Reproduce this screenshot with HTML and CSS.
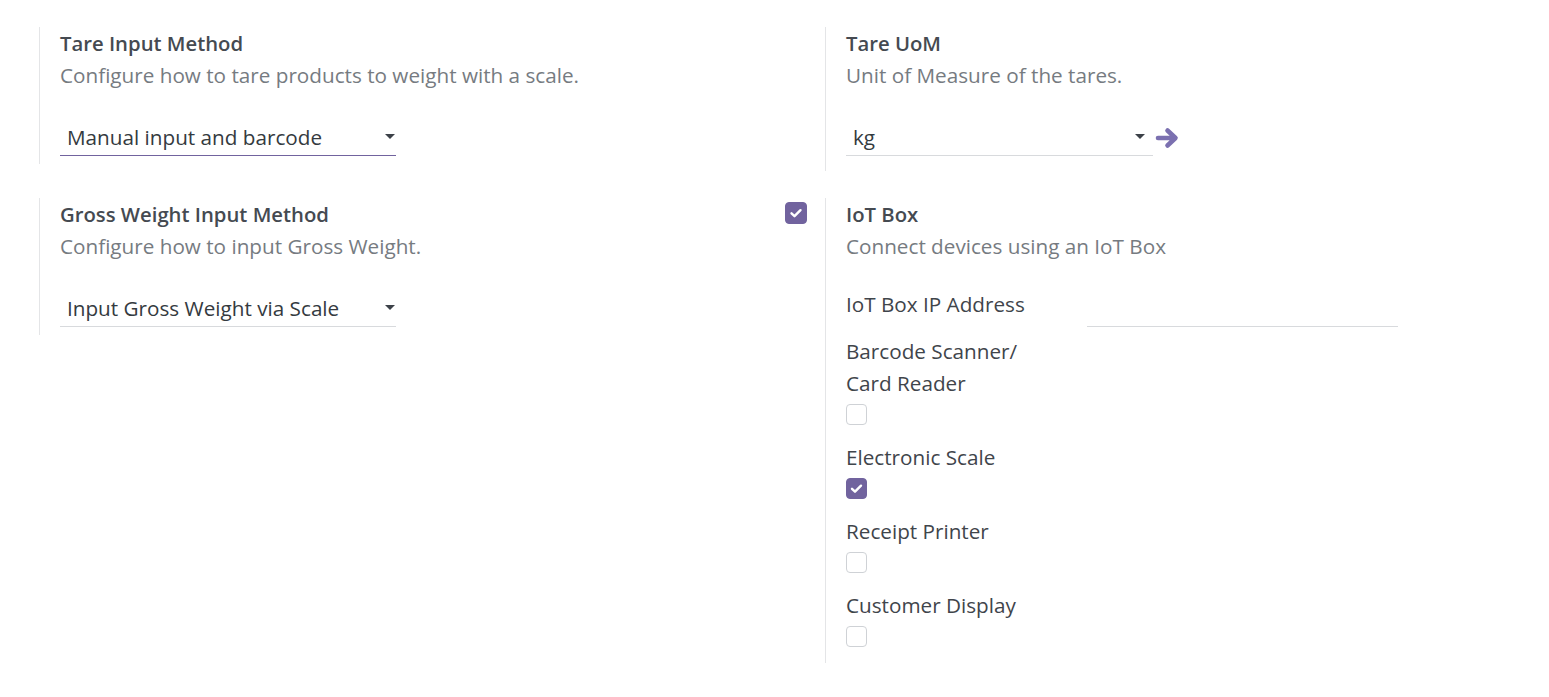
FILE: index.html
```html
<!DOCTYPE html>
<html>
<head>
<meta charset="utf-8">
<link rel="stylesheet" href="styles.css">
</head>
<body>
<div class="settings">
  <div class="box box-short">
    <div class="pane-left"></div>
    <div class="pane-right">
      <div class="title">Tare Input Method</div>
      <div class="desc">Configure how to tare products to weight with a scale.</div>
      <div class="field-row">
        <div class="select select-focus select-wide"><span>Manual input and barcode</span><i class="caret"></i></div>
      </div>
    </div>
  </div>
  <div class="box box-uom">
    <div class="pane-left"></div>
    <div class="pane-right">
      <div class="title">Tare UoM</div>
      <div class="desc">Unit of Measure of the tares.</div>
      <div class="field-row">
        <div class="select select-uom"><span>kg</span><i class="caret"></i></div>
        <svg class="ext-arrow" viewBox="0 0 26 26" width="26" height="26"><path d="M3 13h17M12.5 5.5L20.5 13l-8 7.5" fill="none" stroke="#7b70b0" stroke-width="4.6" stroke-linecap="round" stroke-linejoin="round"/></svg>
      </div>
    </div>
  </div>
  <div class="box box-short">
    <div class="pane-left"></div>
    <div class="pane-right">
      <div class="title">Gross Weight Input Method</div>
      <div class="desc">Configure how to input Gross Weight.</div>
      <div class="field-row">
        <div class="select select-wide"><span>Input Gross Weight via Scale</span><i class="caret"></i></div>
      </div>
    </div>
  </div>
  <div class="box box-iot">
    <div class="pane-left"><span class="cb cb-on cb-big"><svg viewBox="0 0 22 22" width="22" height="22"><path d="M6.5 11.3l3 2.9 6-6" fill="none" stroke="#fff" stroke-width="2.4" stroke-linecap="round" stroke-linejoin="round"/></svg></span></div>
    <div class="pane-right">
      <div class="title">IoT Box</div>
      <div class="desc">Connect devices using an IoT Box</div>
      <div class="ip-row">
        <div class="lbl lbl-ip">IoT Box IP Address</div>
        <div class="ip-input"></div>
      </div>
      <div class="dev">
        <div class="lbl lbl-narrow">Barcode Scanner/ Card Reader</div>
        <span class="cb"></span>
      </div>
      <div class="dev">
        <div class="lbl">Electronic Scale</div>
        <span class="cb cb-on"><svg viewBox="0 0 21 21" width="21" height="21"><path d="M6 10.8l3 2.9 6-6" fill="none" stroke="#fff" stroke-width="2.4" stroke-linecap="round" stroke-linejoin="round"/></svg></span>
      </div>
      <div class="dev">
        <div class="lbl">Receipt Printer</div>
        <span class="cb"></span>
      </div>
      <div class="dev dev-last">
        <div class="lbl">Customer Display</div>
        <span class="cb"></span>
      </div>
    </div>
  </div>
</div>
</body>
</html>
```
FILE: styles.css
```css
html, body {
  margin: 0;
  padding: 0;
  background: #fff;
}
body {
  font-family: "Open Sans", "Noto Sans", sans-serif;
  font-size: 20.7px;
  color: #495057;
}
.settings {
  display: grid;
  grid-template-columns: 785px 1fr;
  row-gap: 27px;
  align-items: start;
  padding-top: 27px;
}
.box {
  display: flex;
}
.pane-left {
  width: 40px;
  flex: none;
  box-sizing: border-box;
}
.box:nth-child(1) .pane-left,
.box:nth-child(3) .pane-left {
  width: 39px;
}
.box-iot .pane-left {
  padding-top: 4px;
}
.pane-right {
  border-left: 1px solid #e4e5e7;
  padding-left: 20px;
  padding-bottom: 8px;
}
.box-uom .pane-right {
  padding-bottom: 15px;
}
.box-iot .pane-right {
  padding-bottom: 16px;
}
.title {
  font-weight: 600;
  font-size: 20.3px;
  line-height: 32px;
  color: #454a51;
}
.desc {
  line-height: 32px;
  color: #767b81;
}
.field-row {
  display: flex;
  align-items: center;
  margin-top: 26px;
}
.select {
  display: flex;
  align-items: center;
  justify-content: space-between;
  box-sizing: border-box;
  height: 39px;
  padding: 2px 1px 0 7px;
  border-bottom: 1px solid #d8dadd;
  line-height: 32px;
  color: #343a40;
}
.select-focus {
  border-bottom-color: #71639e;
}
.select-wide { width: 336px; }
.select-uom { width: 307px; padding-right: 8px; }
.caret {
  width: 0;
  height: 0;
  border-left: 5px solid transparent;
  border-right: 5px solid transparent;
  border-top: 5px solid #3c4148;
  margin-top: -1px;
}
.ext-arrow {
  margin-left: 2px;
  margin-top: 3px;
}
.cb {
  display: block;
  width: 21px;
  height: 21px;
  box-sizing: border-box;
  border: 1px solid #cfd2d6;
  border-radius: 4px;
  background: #fff;
}
.cb-on {
  background: #71639e;
  border-color: #71639e;
  position: relative;
}
.cb-big {
  width: 22px;
  height: 22px;
}
.cb-on svg {
  position: absolute;
  left: -1px;
  top: -1px;
}
.ip-row {
  display: flex;
  margin-top: 26px;
  height: 47px;
}
.lbl {
  line-height: 32px;
  color: #3f454b;
}
.lbl-ip {
  width: 241px;
  flex: none;
}
.ip-input {
  width: 311px;
  height: 38px;
  border-bottom: 1px solid #d8dadd;
}
.lbl-narrow {
  width: 200px;
}
.dev .cb {
  margin-top: 5px;
}
.dev {
  padding-bottom: 16px;
}
.dev-last {
  padding-bottom: 0;
}
```
